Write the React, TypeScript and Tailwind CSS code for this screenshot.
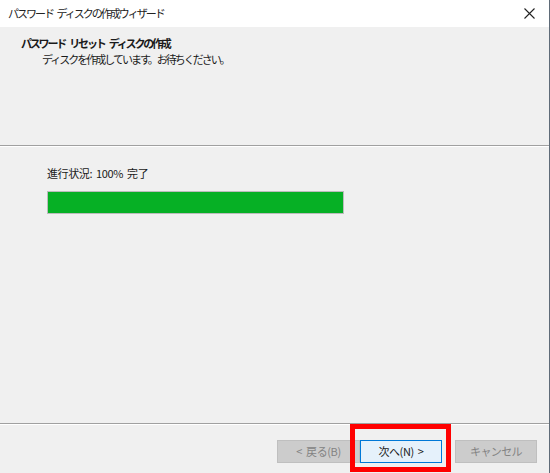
const font = { fontFamily: '"Noto Sans CJK JP", "Noto Sans", sans-serif' };

function CloseIcon() {
  return (
    <svg width="11" height="11" viewBox="0 0 11 11" className="text-[#222]">
      <path d="M0.5 0.5 L10.5 10.5 M10.5 0.5 L0.5 10.5" stroke="currentColor" strokeWidth="1.1" />
    </svg>
  );
}

export default function App() {
  return (
    <div
      className="relative w-[550px] h-[473px] flex flex-col bg-[#f0f0f0] border-r border-[#5f6b78] text-[12px] text-[#1a1a1a] overflow-hidden"
      style={font}
    >
      {/* title bar */}
      <div className="h-[27px] shrink-0 bg-white flex items-center justify-between pl-[8px] pr-[14px]">
        <span className="text-[11px] tracking-[-2px] [word-spacing:3px] text-[#222] leading-none">パスワード ディスクの作成ウィザード</span>
        <CloseIcon />
      </div>

      {/* header */}
      <div className="h-[118px] shrink-0 pt-[8px] pl-[21px]">
        <div className="font-bold text-[11px] tracking-[-2.2px] [word-spacing:4px] leading-[16px]">パスワード リセット ディスクの作成</div>
        <div className="pl-[21px] text-[11px] tracking-[-2px] leading-[16px]">ディスクを作成しています。お待ちください。</div>
      </div>
      <div className="h-px shrink-0 bg-[#a0a0a0]" />
      <div className="h-px shrink-0 bg-white" />

      {/* body */}
      <div className="flex-1 pt-[18px] pl-[47px]">
        <div className="text-[11px] tracking-[-0.4px] [word-spacing:2px] leading-[16px]">進行状況: 100% 完了</div>
        <div className="mt-[10px] w-[297px] h-[23px] border border-[#bcbcbc] bg-[#e6e6e6]">
          <div className="h-full bg-[#06b025]" style={{ width: "100%" }} />
        </div>
      </div>

      <div className="h-px shrink-0 bg-[#a0a0a0]" />
      <div className="h-px shrink-0 bg-white" />

      {/* footer */}
      <div className="h-[48px] shrink-0 flex items-start pt-[15px] pl-[277px]">
        <button className="w-[83px] h-[23px] bg-[#cccccc] border border-[#bfbfbf] text-[#838383] text-[11px] tracking-[-0.4px] [word-spacing:2px] leading-none">
          &lt; 戻る(B)
        </button>
        <button className="w-[82px] h-[23px] bg-[#e5f1fb] border border-[#0078d7] text-[#1a1a1a] text-[11px] tracking-[-0.4px] [word-spacing:2px] leading-none">
          次へ(N) &gt;
        </button>
        <button className="ml-[13px] w-[82px] h-[23px] bg-[#cccccc] border border-[#bfbfbf] text-[#838383] text-[11px] tracking-[-0.6px] leading-none">
          キャンセル
        </button>
      </div>

      {/* red highlight annotation */}
      <div className="absolute left-[350px] top-[424px] w-[101px] h-[48px] border-[5px] border-[#ff0000] pointer-events-none" />
    </div>
  );
}
